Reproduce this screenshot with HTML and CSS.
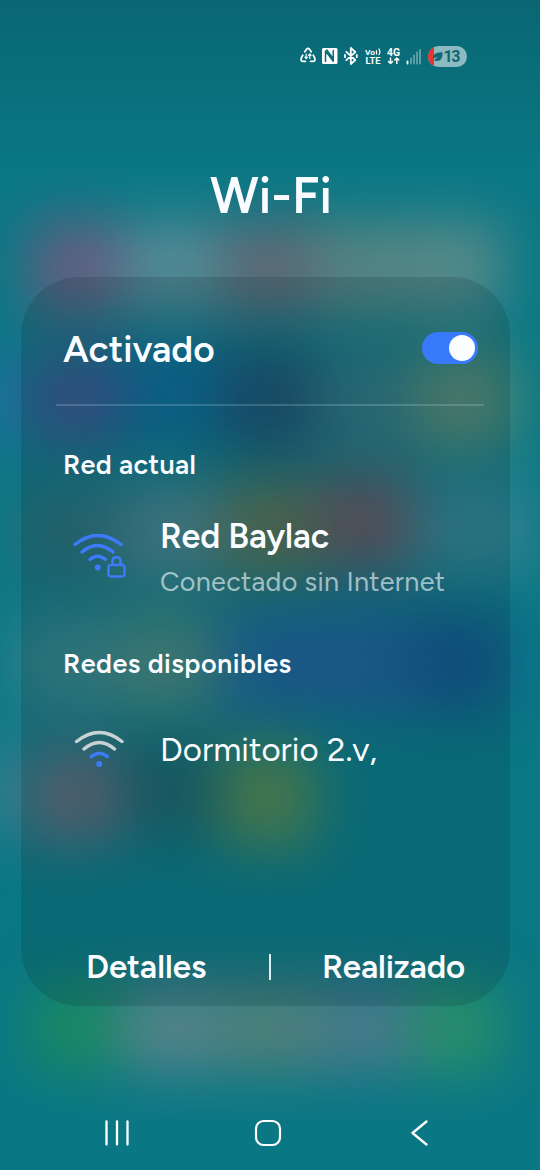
FILE: index.html
```html
<!DOCTYPE html>
<html lang="es">
<head>
<meta charset="utf-8">
<title>Wi-Fi</title>
<link rel="stylesheet" href="styles.css">
</head>
<body>
<div class="screen">
  <svg class="wallpaper" viewBox="0 0 540 1170" aria-hidden="true">
    <defs>
      <linearGradient id="base" x1="0" y1="0" x2="0" y2="1">
        <stop offset="0" stop-color="#0a6673"/><stop offset=".06" stop-color="#096e7a"/><stop offset=".15" stop-color="#0a7885"/><stop offset="1" stop-color="#0a7784"/>
      </linearGradient>
      <filter id="soft" filterUnits="userSpaceOnUse" x="-120" y="100" width="780" height="1070" color-interpolation-filters="sRGB"><feGaussianBlur stdDeviation="28"/></filter>
    </defs>
    <rect width="540" height="1170" fill="url(#base)"/>
    <g filter="url(#soft)" opacity=".94">
      <rect x="30" y="222" width="90" height="92" fill="#6c5c80"/>
      <rect x="122" y="222" width="98" height="92" fill="#5a8c97"/>
      <rect x="222" y="222" width="94" height="92" fill="#666874"/>
      <rect x="316" y="222" width="98" height="92" fill="#5c8682"/>
      <rect x="414" y="222" width="88" height="92" fill="#5d8b89"/>
      <rect x="-60" y="350" width="82" height="96" fill="#18739a"/>
      <rect x="32" y="356" width="88" height="86" fill="#40528e"/>
      <rect x="120" y="346" width="102" height="92" fill="#0d6996"/>
      <rect x="222" y="352" width="94" height="98" fill="#1d4d6e"/>
      <rect x="316" y="352" width="98" height="98" fill="#307580"/>
      <rect x="416" y="352" width="98" height="96" fill="#5c8973"/>
      <rect x="20" y="484" width="100" height="96" fill="#2c6d78"/>
      <rect x="122" y="484" width="98" height="96" fill="#4b828d"/>
      <rect x="222" y="480" width="94" height="96" fill="#5c6e50"/>
      <rect x="318" y="474" width="94" height="96" fill="#665460"/>
      <rect x="414" y="480" width="122" height="96" fill="#348292"/>
      <rect x="16" y="614" width="106" height="98" fill="#3a838a"/>
      <rect x="120" y="614" width="96" height="98" fill="#4a877d"/>
      <rect x="220" y="614" width="98" height="98" fill="#206298"/>
      <rect x="316" y="614" width="96" height="98" fill="#205f9a"/>
      <rect x="410" y="614" width="96" height="98" fill="#13538b"/>
      <rect x="-60" y="744" width="84" height="88" fill="#258091"/>
      <rect x="30" y="750" width="90" height="92" fill="#666877"/>
      <rect x="124" y="744" width="92" height="92" fill="#1b6069"/>
      <rect x="222" y="748" width="92" height="98" fill="#57884f"/>
      <rect x="32" y="984" width="86" height="86" fill="#1c8b5e"/>
      <rect x="122" y="984" width="98" height="88" fill="#5a848a"/>
      <rect x="222" y="984" width="94" height="88" fill="#548078"/>
      <rect x="316" y="984" width="96" height="88" fill="#4c7a8b"/>
      <rect x="414" y="984" width="86" height="88" fill="#2c9167"/>
    </g>
  </svg>

  <header class="status">
    <svg class="status-icons" width="174" height="26" viewBox="0 0 174 26" fill="none" stroke="#fff" stroke-linecap="round" stroke-linejoin="round">
      <g stroke-width="1.700"><path d="M4.800 8.800 6.500 6.200q1.500-1.700 3 0l1.700 2.600M2.800 12.200 1.300 15q-1 3 1.500 3.300h2.700M13.200 12.200 14.700 15q1 3-1.500 3.300h-2.700"/><path stroke-width="1.200" d="M6.200 11v4.500M4.900 14.200l1.300 1.300 1.300-1.300M9.800 15.500V11M8.500 12.300 9.800 11l1.300 1.300"/></g>
      <rect x="22" y="5" width="15.500" height="16" rx="1.500" fill="#fff" stroke="none"/>
      <path d="M25.500 18.500V8L33.300 18.200V7.500M26.800 7l6 8" stroke="#086b77" stroke-width="1.500"/>
      <path d="m46.300 8.800 9 8.200-4.500 4V5l4.500 4-9 8.200M45 11.800v2.400M56.800 11.800v2.400" stroke-width="1.800"/>
      <g class="status-text" fill="#fff" stroke="none">
        <text x="65" y="11.500" font-size="8" textLength="10" lengthAdjust="spacingAndGlyphs">Vo</text><text x="65.500" y="21" font-size="9.500" textLength="15" lengthAdjust="spacingAndGlyphs">LTE</text>
        <text x="87" y="12.500" font-size="10.500" textLength="13" lengthAdjust="spacingAndGlyphs">4G</text>
      </g>
      <path d="M76.500 7.500v3.500M79 6q1.800 3 0 5.500" stroke-width="1.200"/>
      <path d="M90.500 15V20.500m-2-2 2 2 2-2M96.800 20.500v-5.500m-2 2 2-2 2 2" stroke-width="1.500"/>
      <path d="M107.500 18.500v2" stroke-width="1.800"/><path d="M111 15.500v5M114 12.500v8M117 9.500v11M120 7v13.500" stroke="#8bb9bd" stroke-opacity=".7" stroke-width="1.800"/>
      <clipPath id="pill"><rect x="128" y="3" width="39" height="21" rx="10.500"/></clipPath>
      <g clip-path="url(#pill)" stroke="none"><path fill="#8bbac0" d="M128 3h39v21h-39z"/><path fill="#e9342d" d="M128 3h6v21h-6z"/></g>
      <path d="M133 15.500q0-6.800 9.500-6.300 .5 9-6 8.700-1.500 0-2.300-1l4-3.200-5.200 1.800z" fill="#106873" stroke="none"/>
      <text class="battery" x="143.500" y="19" font-size="16" textLength="17" stroke="none" fill="#106873">13</text>
    </svg>
  </header>

  <h1 class="title">Wi-Fi</h1>

  <main class="panel">
    <div class="toggle-row">
      <span class="toggle-label">Activado</span>
      <span class="switch"><span class="knob"></span></span>
    </div>
    <h2 class="section current">Red actual</h2>
    <div class="network connected">
      <svg class="wifi" width="58" height="50" viewBox="0 0 58 50" fill="none" stroke="#3e7bfa" stroke-linecap="round">
        <path stroke-width="3.400" d="M5 13.500Q27.500-4.500 51 13.500M12 21Q27.500 8 43 21M20 28.500Q27.500 22 35.500 28.500"/>
        <circle cx="27.800" cy="36.500" r="3" fill="#3e7bfa" stroke="none"/>
        <rect x="38.500" y="34" width="16" height="11.500" rx="2.500" stroke-width="2.500"/><path d="M42.500 33.500v-3.200q0-4 4-4t4 4v3.200" stroke-width="2.500"/>
      </svg>
      <div class="network-text">
        <div class="network-name">Red Baylac</div>
        <div class="network-note">Conectado sin Internet</div>
      </div>
    </div>
    <h2 class="section available">Redes disponibles</h2>
    <div class="network other">
      <svg class="wifi" width="58" height="44" viewBox="0 0 58 44" fill="none" stroke-linecap="round">
        <path stroke="#c9d2d5" stroke-width="3.400" d="M6.500 13.500Q29.300-4.500 52 13.500M14 21Q29.300 8 44.500 21"/>
        <path stroke="#3e7bfa" stroke-width="3.600" d="M21.300 28.500Q29.300 22 37.300 28.500"/>
        <circle cx="29.300" cy="36" r="3" fill="#3e7bfa"/>
      </svg>
      <div class="network-plain">Dormitorio 2.v,</div>
    </div>
    <footer class="actions">
      <span class="action details">Detalles</span>
      <span class="divider"></span>
      <span class="action done">Realizado</span>
    </footer>
  </main>

  <nav class="navbar">
    <svg width="26" height="28" viewBox="0 0 26 28" stroke="#fff" stroke-width="2.300" stroke-linecap="round"><path d="M2.500 2.500v23M13 2.500v23M23.500 2.500v23"/></svg>
    <svg class="home" width="28" height="28" viewBox="0 0 28 28" fill="none" stroke="#fff" stroke-width="2.200"><rect x="2" y="2" width="24" height="24" rx="7.500"/></svg>
    <svg width="20" height="28" viewBox="0 0 20 28" fill="none" stroke="#fff" stroke-width="2.300" stroke-linecap="round" stroke-linejoin="round"><path d="M16.500 2.500 2.500 14 16.500 25.500"/></svg>
  </nav>
</div>
</body>
</html>
```
FILE: styles.css
```css
* { box-sizing: border-box; }
body { margin: 0; font-family: Figtree, Inter, "Open Sans", sans-serif; color: #fafcff; }
.screen { position: relative; display: flex; flex-direction: column; width: 540px; height: 1170px; overflow: hidden; isolation: isolate; background: #0a7784; }
.wallpaper { position: absolute; inset: 0; width: 540px; height: 1170px; z-index: -1; }
.status { display: flex; justify-content: flex-end; height: 70px; padding: 43px 66px 0 0; }
.status-icons { flex: none; }
.status-text, .battery { font-family: Roboto, sans-serif; font-weight: 700; }
.title { margin: 95px 0 0; height: 112px; padding-left: 2px; text-align: center; font-size: 50px; line-height: 62px; font-weight: 650; }
.panel { display: flex; flex-direction: column; width: 489px; height: 729px; margin-left: 21px; border-radius: 58px; background: rgba(6, 24, 30, 0.14); }
.toggle-row { display: flex; align-items: center; justify-content: space-between; width: 428px; height: 129px; margin-left: 35px; padding: 18px 6px 0 7px; border-bottom: 2px solid rgba(210, 235, 240, 0.2); }
.toggle-label { margin-top: -2px; font-size: 37px; line-height: 44px; font-weight: 630; letter-spacing: 0; }
.switch { display: flex; justify-content: flex-end; align-items: center; width: 56px; height: 32px; margin-bottom: 4px; padding-right: 3px; border-radius: 16px; background: #3979fc; }
.knob { width: 26px; height: 26px; border-radius: 50%; background: #fcfdff; }
.section { margin: 0 0 0 42px; font-size: 27px; line-height: 32px; font-weight: 630; letter-spacing: 0.35px; white-space: nowrap; }
.current { margin-top: 43px; }
.available { letter-spacing: 0.45px; }
.network { display: flex; padding-left: 49px; }
.wifi { flex: none; }
.network-text, .network-plain { margin-left: 32px; white-space: nowrap; }
.connected { height: 167px; padding-top: 33px; }
.connected .wifi { margin-top: 17px; }
.network-name { font-size: 34px; line-height: 46px; font-weight: 630; letter-spacing: -0.1px; }
.network-note { font-size: 27px; line-height: 44px; letter-spacing: 0.3px; color: rgba(225, 240, 243, 0.68); }
.other { padding-top: 48px; }
.network-plain { font-size: 33px; line-height: 44px; letter-spacing: 0.05px; }
.actions { display: flex; align-items: center; height: 79px; margin-top: auto; padding: 0 40px 0 65px; }
.action { font-size: 33px; line-height: 40px; font-weight: 630; white-space: nowrap; letter-spacing: -0.15px; }
.details { width: 183px; letter-spacing: 0; }
.divider { flex: none; width: 1.5px; height: 26px; margin-right: 51.500px; background: rgba(250, 252, 255, 0.9); }
.navbar { display: flex; justify-content: space-between; margin-top: 113px; padding: 0 110px 0 104px; }
.home { margin-right: 4px; }
```
